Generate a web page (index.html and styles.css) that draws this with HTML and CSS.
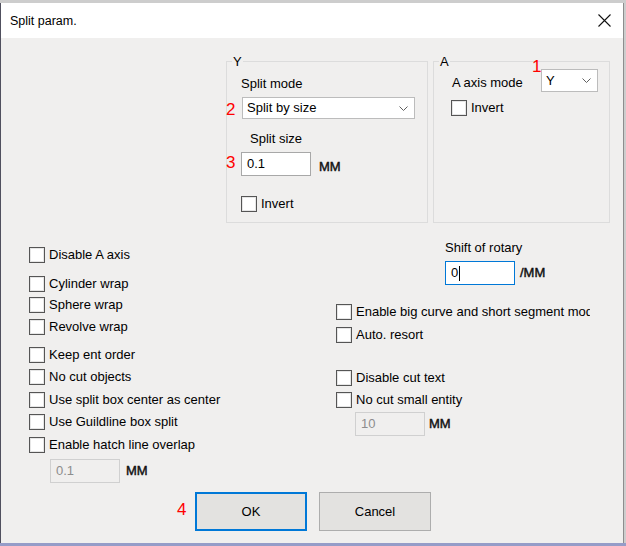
FILE: index.html
```html
<!DOCTYPE html>
<html lang="en">
<head>
<meta charset="utf-8">
<title>Split param.</title>
<link rel="stylesheet" href="styles.css">
</head>
<body>
<div class="window">
  <div class="titlebar">
    <span class="title">Split param.</span>
    <svg class="close" width="13" height="13" viewBox="0 0 13 13"><path d="M0.5 0.5L12.5 12.5M12.5 0.5L0.5 12.5" stroke="#111" stroke-width="1.1" fill="none"/></svg>
  </div>
  <div class="content">
    <div class="top-row">
      <div class="group group-y">
        <span class="group-title">Y</span>
        <div class="label">Split mode</div>
        <div class="select select-mode"><span>Split by size</span><svg class="chev" width="9" height="5" viewBox="0 0 9 5"><path d="M0.5 0.5L4.5 4.5L8.5 0.5" stroke="#606060" stroke-width="1" fill="none"/></svg></div>
        <div class="label label-size">Split size</div>
        <div class="field-row row-size">
          <div class="field">0.1</div>
          <span class="unit unit-y">MM</span>
        </div>
        <div class="check check-invert-y"><span class="box"></span><span>Invert</span></div>
      </div>
      <div class="group group-a">
        <span class="group-title">A</span>
        <div class="axis-row">
          <span class="axis-label">A axis mode</span>
          <div class="select select-axis"><span>Y</span><svg class="chev" width="9" height="5" viewBox="0 0 9 5"><path d="M0.5 0.5L4.5 4.5L8.5 0.5" stroke="#606060" stroke-width="1" fill="none"/></svg></div>
        </div>
        <div class="check check-invert-a"><span class="box"></span><span>Invert</span></div>
      </div>
    </div>

    <div class="middle">
      <div class="col-left">
        <div class="check"><span class="box"></span><span>Disable A axis</span></div>
        <div class="check"><span class="box"></span><span>Cylinder wrap</span></div>
        <div class="check"><span class="box"></span><span>Sphere wrap</span></div>
        <div class="check"><span class="box"></span><span>Revolve wrap</span></div>
        <div class="check"><span class="box"></span><span>Keep ent order</span></div>
        <div class="check"><span class="box"></span><span>No cut objects</span></div>
        <div class="check"><span class="box"></span><span>Use split box center as center</span></div>
        <div class="check"><span class="box"></span><span>Use Guildline box split</span></div>
        <div class="check"><span class="box"></span><span>Enable hatch line overlap</span></div>
        <div class="field-row indent-left">
          <div class="field disabled">0.1</div>
          <span class="unit">MM</span>
        </div>
      </div>
      <div class="col-right">
        <div class="label shift-label">Shift of rotary</div>
        <div class="field-row shift-row">
          <div class="field focused">0<span class="caret"></span></div>
          <span class="unit unit-slash">/MM</span>
        </div>
        <div class="right-checks">
          <div class="check clip"><span class="box"></span><span>Enable big curve and short segment mode</span></div>
          <div class="check"><span class="box"></span><span>Auto. resort</span></div>
          <div class="check"><span class="box"></span><span>Disable cut text</span></div>
          <div class="check"><span class="box"></span><span>No cut small entity</span></div>
          <div class="field-row indent-right">
            <div class="field disabled">10</div>
            <span class="unit unit-small">MM</span>
          </div>
        </div>
      </div>
    </div>

    <div class="buttons">
      <button class="btn btn-default">OK</button>
      <button class="btn">Cancel</button>
    </div>

    <span class="marker m1">1</span>
    <span class="marker m2">2</span>
    <span class="marker m3">3</span>
    <span class="marker m4">4</span>
  </div>
</div>
</body>
</html>
```

FILE: styles.css
```css
* { box-sizing: border-box; }

html, body {
  margin: 0;
  padding: 0;
}

body {
  width: 626px;
  height: 546px;
  overflow: hidden;
  background: linear-gradient(to bottom, #cdcdcd 0, #cdcdcd 543px, #959cc8 543px, #959cc8 546px);
  font-family: "Liberation Sans", Arial, sans-serif;
  font-size: 13px;
  line-height: 16px;
  color: #000;
}

.window {
  margin-top: 3px;
  width: 624px;
  height: 540px;
  border-left: 1px solid #50505e;
  border-right: 1px solid #8d8d8d;
  background: #f0efee;
  display: flex;
  flex-direction: column;
}

.titlebar {
  height: 35px;
  flex: none;
  background: #fff;
  display: flex;
  align-items: center;
  padding-left: 9px;
}

.title {
  font-size: 12.5px;
  color: #000;
}

.close {
  margin-left: auto;
  margin-right: 12px;
}

.content {
  position: relative;
  flex: 1;
}

/* top group boxes */
.top-row {
  display: flex;
  gap: 5px;
  padding-left: 225px;
  margin-top: 23px;
}

.group {
  position: relative;
  height: 162px;
  border: 1px solid #dcdcdc;
  display: flex;
  flex-direction: column;
  align-items: flex-start;
}

.group-y {
  width: 202px;
  padding: 14px 0 0 14px;
}

.group-a {
  width: 177px;
  padding: 7px 11px 0 18px;
  align-items: stretch;
}

.group-title {
  position: absolute;
  top: -8px;
  left: 5px;
  padding: 0 1px;
  background: #f0efee;
}

.label-size {
  margin: 12px 0 0 9px;
}

.select {
  display: flex;
  align-items: center;
  justify-content: space-between;
  background: #fff;
  border: 1px solid #bcbcbc;
}

.select-mode {
  width: 173px;
  height: 22px;
  margin: 5px 0 0 1px;
  padding: 0 6px 0 4px;
}

.select-axis {
  width: 57px;
  height: 23px;
  padding: 0 6px 0 4px;
}

.axis-row {
  display: flex;
  justify-content: space-between;
  align-items: flex-start;
}

.axis-label {
  margin-top: 6px;
}

.row-size {
  margin-top: 5px;
}

.check-invert-y {
  margin-top: 20px;
}

.check-invert-a {
  margin: 8px 0 0 -1px;
}

/* fields */
.field-row {
  display: flex;
  align-items: center;
}

.field {
  width: 70px;
  height: 24px;
  border: 1px solid #a8a8a8;
  background: #fff;
  padding-left: 5px;
  display: flex;
  align-items: center;
}

.field.disabled {
  background: #f0efee;
  border-color: #d0d0d0;
  color: #8d8d8d;
}

.field.focused {
  border-color: #0078d7;
}

.caret {
  width: 1px;
  height: 15px;
  background: #000;
  margin-left: 1px;
}

.unit {
  margin-left: 6px;
  color: #111;
  -webkit-text-stroke: 0.45px #111;
}

.unit-y {
  margin-left: 8px;
  padding-top: 5px;
}

.unit-small {
  margin-left: 4px;
}

.unit-slash {
  margin-left: 5px;
}

/* checkboxes */
.check {
  display: flex;
  align-items: flex-start;
  gap: 4px;
  white-space: nowrap;
}

.box {
  flex: none;
  width: 16px;
  height: 16px;
  border: 1px solid #555;
  background: #fff;
  box-shadow: inset 0 0 0 1px #e6e6e6;
}

.clip {
  width: 254px;
  overflow: hidden;
}

/* middle area */
.middle {
  display: flex;
  margin-top: 17px;
}

.col-left {
  width: 335px;
  flex: none;
  padding: 7px 0 0 28px;
  display: grid;
  grid-template-rows: 29px 21px 22px 28px 22px 23px 22px 23px 22px 24px;
}

.indent-left {
  margin-left: 21px;
}

.col-right {
  flex: 1;
  display: flex;
  flex-direction: column;
  align-items: flex-start;
}

.shift-label {
  margin-left: 109px;
}

.shift-row {
  margin: 5px 0 0 109px;
}

.right-checks {
  margin-top: 19px;
  display: grid;
  grid-template-rows: 23px 43px 22px 20px 24px;
}

.indent-right {
  margin-left: 19px;
}

/* buttons */
.buttons {
  display: flex;
  gap: 12px;
  padding-left: 194px;
  margin-top: 9px;
}

.btn {
  width: 112px;
  height: 39px;
  margin: 0;
  padding: 0;
  background: #e3e2e0;
  border: 1px solid #adadad;
  font-family: inherit;
  font-size: 13px;
  color: #000;
}

.btn-default {
  border: 2px solid #0078d7;
}

/* red annotation numbers */
.marker {
  position: absolute;
  color: #f00;
  font-size: 17px;
  line-height: 17px;
}

.m1 { left: 531px; top: 20px; }
.m2 { left: 225px; top: 63px; }
.m3 { left: 225px; top: 116px; }
.m4 { left: 176px; top: 463px; }
```
